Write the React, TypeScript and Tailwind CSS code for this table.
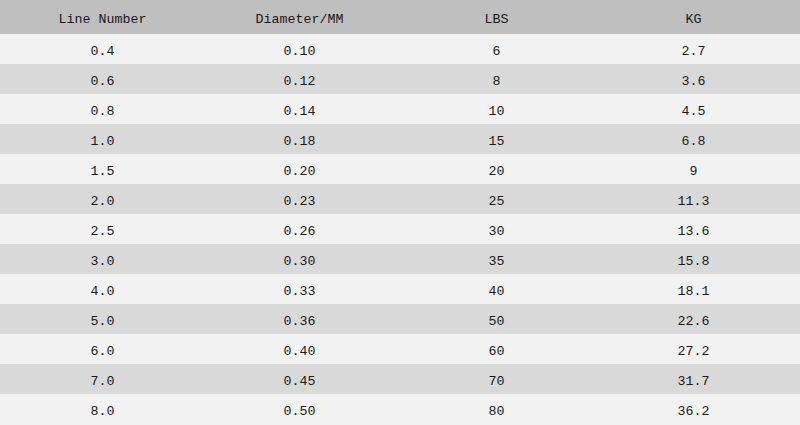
const rows = [
  ["0.4", "0.10", "6", "2.7"],
  ["0.6", "0.12", "8", "3.6"],
  ["0.8", "0.14", "10", "4.5"],
  ["1.0", "0.18", "15", "6.8"],
  ["1.5", "0.20", "20", "9"],
  ["2.0", "0.23", "25", "11.3"],
  ["2.5", "0.26", "30", "13.6"],
  ["3.0", "0.30", "35", "15.8"],
  ["4.0", "0.33", "40", "18.1"],
  ["5.0", "0.36", "50", "22.6"],
  ["6.0", "0.40", "60", "27.2"],
  ["7.0", "0.45", "70", "31.7"],
  ["8.0", "0.50", "80", "36.2"],
];

export default function App() {
  return (
    <div className="w-[800px] h-[425px] overflow-hidden bg-[#f2f2f2] font-['Liberation_Mono',monospace] text-[13.3px] text-[#1a1a1a]">
      <div className="grid grid-cols-[197px_197px_197px_197px] pl-[4px] pt-[6px] h-[34px] items-center bg-[#bfbfbf]">
        <div className="text-center">Line Number</div>
        <div className="text-center">Diameter/MM</div>
        <div className="text-center">LBS</div>
        <div className="text-center">KG</div>
      </div>
      {rows.map((r, i) => (
        <div
          key={i}
          className={
            "grid grid-cols-[197px_197px_197px_197px] pl-[4px] pt-[6px] h-[30px] items-center " +
            (i % 2 === 0 ? "bg-[#f2f2f2]" : "bg-[#d9d9d9]")
          }
        >
          {r.map((c, j) => (
            <div key={j} className="text-center">
              {c}
            </div>
          ))}
        </div>
      ))}
    </div>
  );
}
